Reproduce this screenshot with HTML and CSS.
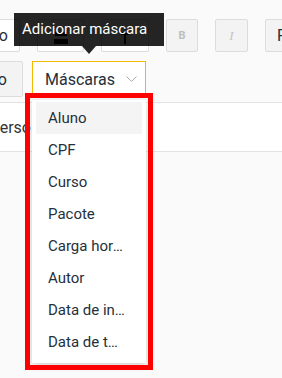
FILE: index.html
```html
<!DOCTYPE html>
<html lang="pt-BR">
<head>
  <meta charset="UTF-8" />
  <meta name="viewport" content="width=device-width, initial-scale=1.0"/>
  <title>Editor de certificado</title>
  <link rel="stylesheet" href="styles.css">
</head>
<body>
  <div class="toolbar">
    <div class="tool-row first-row">
      <button class="tool-btn btn-wide">Texto</button>
      <button class="tool-btn btn-icon">
        <svg width="16" height="14" viewBox="0 0 16 14"><path d="M2 1h12v4H2z M1 8h14v5H1z" fill="#000"/></svg>
      </button>
      <button class="tool-btn btn-icon btn-icon2">
        <svg width="10" height="14" viewBox="0 0 10 14"><path d="M1 1h8v3H6v9H4V4H1z" fill="#000"/></svg>
      </button>
      <button class="tool-btn btn-grey btn-bold">B</button>
      <button class="tool-btn btn-grey btn-italic">I</button>
      <button class="tool-btn btn-grey btn-font">Fonte</button>
    </div>
    <div class="tool-row second-row">
      <button class="tool-btn btn-grey btn-wide2">Fundo</button>
      <button class="mask-btn">
        Máscaras
        <svg width="11" height="7" viewBox="0 0 11 7"><path d="M0.5 0.5l5 5 5-5" fill="none" stroke="#aaa" stroke-width="1"/></svg>
      </button>
    </div>
  </div>

  <div class="tabs">
    <div class="tab-label">Verso</div>
  </div>

  <div class="tooltip">Adicionar máscara</div>

  <ul class="mask-menu">
    <li class="active">Aluno</li>
    <li>CPF</li>
    <li>Curso</li>
    <li>Pacote</li>
    <li>Carga horária</li>
    <li>Autor</li>
    <li>Data de início</li>
    <li>Data de término</li>
  </ul>
</body>
</html>
```

FILE: styles.css
```css
body {
  margin: 0;
  font-family: Roboto, "Liberation Sans", sans-serif;
  background-color: #fafafa;
  color: #25303b;
  width: 282px;
  height: 378px;
  overflow: hidden;
  position: relative;
}

.toolbar {
  padding-top: 19px;
}

.tool-row {
  display: flex;
  margin-left: -20px;
  white-space: nowrap;
}

.first-row {
  gap: 17px;
}

.second-row {
  gap: 9px;
  margin-top: 9px;
  margin-left: -40px;
}

.tool-btn {
  flex-shrink: 0;
  height: 33px;
  border: 1px solid #dcdcdc;
  border-radius: 2px;
  background-color: #fff;
  font-family: Roboto, "Liberation Sans", sans-serif;
  font-size: 16px;
  color: #25303b;
  padding: 0;
  display: flex;
  align-items: center;
  justify-content: flex-end;
  overflow: hidden;
}

.btn-wide {
  width: 40px;
  padding-right: 11px;
}

.btn-icon {
  width: 47px;
  justify-content: center;
}

.btn-icon svg {
  margin-top: 4px;
}

.btn-icon2 {
  width: 48px;
}

.btn-grey {
  background-color: #f3f3f3;
}

.btn-bold {
  width: 32px;
  justify-content: center;
  font-size: 11px;
  font-weight: bold;
  color: #bdbdbd;
}

.btn-italic {
  width: 33px;
  justify-content: center;
  font-family: "Liberation Serif", serif;
  font-style: italic;
  font-size: 13px;
  color: #c4c4c4;
}

.btn-font {
  width: 60px;
  justify-content: flex-start;
  padding-left: 11px;
}

.btn-wide2 {
  width: 63px;
  height: 36px;
  padding-right: 15px;
}

.mask-btn {
  flex-shrink: 0;
  width: 114px;
  height: 36px;
  border: 1px solid #f5b800;
  background-color: #fff;
  font-family: Roboto, "Liberation Sans", sans-serif;
  font-size: 16px;
  color: #25303b;
  padding: 0 0 0 12px;
  display: flex;
  align-items: center;
  gap: 11px;
}

.tabs {
  margin-top: 5px;
  height: 48px;
  border-top: 1px solid #e3e3e3;
  border-bottom: 1px solid #e3e3e3;
  background-color: #fff;
  display: flex;
  align-items: center;
}

.tab-label {
  width: 31px;
  display: flex;
  justify-content: flex-end;
  font-size: 16px;
  color: #333;
  white-space: nowrap;
}

/* Tooltip over the toolbar */
.tooltip {
  position: absolute;
  left: 14px;
  top: 13px;
  width: 150px;
  height: 33px;
  line-height: 33px;
  box-sizing: border-box;
  padding-left: 8px;
  background-color: rgba(0, 0, 0, 0.86);
  color: #fff;
  font-size: 15px;
  white-space: nowrap;
}

.tooltip::after {
  content: "";
  position: absolute;
  left: 68px;
  top: 33px;
  border-left: 7px solid transparent;
  border-right: 7px solid transparent;
  border-top: 8px solid rgba(0, 0, 0, 0.86);
}

/* Masks dropdown */
.mask-menu {
  position: absolute;
  left: 32px;
  top: 100px;
  width: 114px;
  box-sizing: border-box;
  margin: 0;
  padding: 2px 0 5px;
  list-style: none;
  background-color: #fff;
  box-shadow: 0 2px 8px rgba(0, 0, 0, 0.18);
  outline: 5px solid #ff0000;
  outline-offset: 2px;
}

.mask-menu li {
  height: 32px;
  line-height: 32px;
  margin: 0 4px;
  padding: 0 17px 0 12px;
  font-size: 15px;
  white-space: nowrap;
  overflow: hidden;
  text-overflow: ellipsis;
}

.mask-menu li.active {
  background-color: #f4f4f4;
}
```
